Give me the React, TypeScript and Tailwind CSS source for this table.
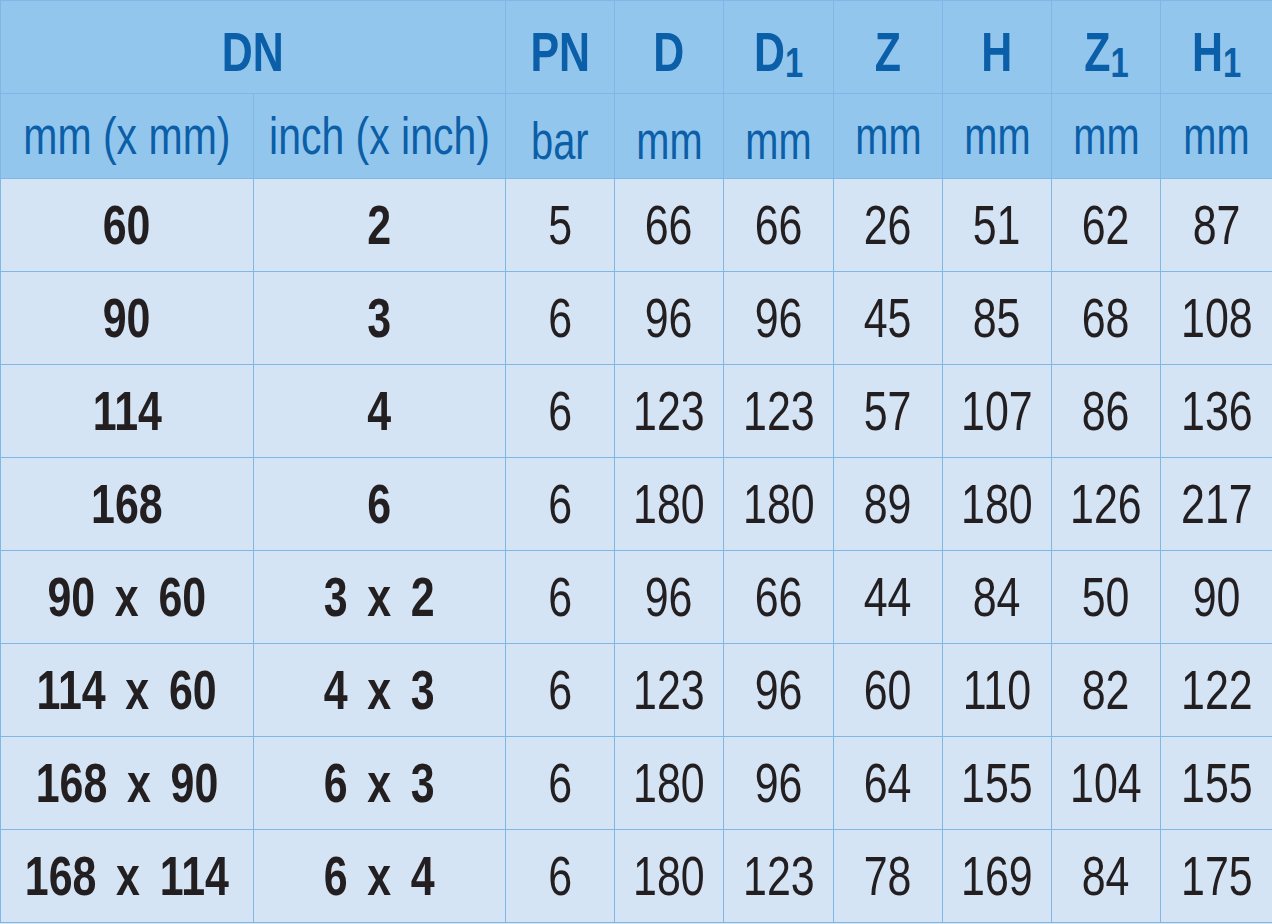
const font = 'font-["Liberation_Sans",Arial,sans-serif]'

type Row = { mm: string; inch: string; vals: string[] }

const rows: Row[] = [
  { mm: '60', inch: '2', vals: ['5', '66', '66', '26', '51', '62', '87'] },
  { mm: '90', inch: '3', vals: ['6', '96', '96', '45', '85', '68', '108'] },
  { mm: '114', inch: '4', vals: ['6', '123', '123', '57', '107', '86', '136'] },
  { mm: '168', inch: '6', vals: ['6', '180', '180', '89', '180', '126', '217'] },
  { mm: '90 x 60', inch: '3 x 2', vals: ['6', '96', '66', '44', '84', '50', '90'] },
  { mm: '114 x 60', inch: '4 x 3', vals: ['6', '123', '96', '60', '110', '82', '122'] },
  { mm: '168 x 90', inch: '6 x 3', vals: ['6', '180', '96', '64', '155', '104', '155'] },
  { mm: '168 x 114', inch: '6 x 4', vals: ['6', '180', '123', '78', '169', '84', '175'] },
]

const symbols = [
  { base: 'PN' },
  { base: 'D' },
  { base: 'D', sub: '1' },
  { base: 'Z' },
  { base: 'H' },
  { base: 'Z', sub: '1' },
  { base: 'H', sub: '1' },
]

const units = ['bar', 'mm', 'mm', 'mm', 'mm', 'mm', 'mm']

// condensed look: Liberation Sans squeezed horizontally, centred even when wider than the cell
function Narrow({ children, className = '' }: { children: React.ReactNode; className?: string }) {
  return (
    <div className={`flex justify-center ${className}`}>
      <span className="shrink-0 inline-block whitespace-nowrap scale-x-[0.78]">{children}</span>
    </div>
  )
}

export default function App() {
  const cell = 'border border-[#7fb7e6] text-center p-0 align-middle'
  return (
    <div className={`w-[1272px] h-[924px] overflow-hidden bg-[#d5e4f5] ${font}`}>
      <table className="table-fixed border-collapse w-[1272px]">
        <colgroup>
          <col className="w-[253px]" />
          <col className="w-[252px]" />
          <col className="w-[109px]" />
          <col className="w-[109px]" />
          <col className="w-[110px]" />
          <col className="w-[109px]" />
          <col className="w-[109px]" />
          <col className="w-[109px]" />
          <col className="w-[112px]" />
        </colgroup>
        <thead className="bg-[#93c6ec] text-[#0b5ea8]">
          <tr className="h-[93px] text-[55px] font-bold leading-none">
            <th colSpan={2} className={cell}>
              <Narrow className="pt-[10px]">DN</Narrow>
            </th>
            {symbols.map((s, i) => (
              <th key={i} className={cell}>
                <Narrow className="pt-[10px]">
                  {s.base}
                  {s.sub && <span className="relative top-[6px] text-[42px]">{s.sub}</span>}
                </Narrow>
              </th>
            ))}
          </tr>
          <tr className="h-[85px] text-[51px] leading-none">
            <th className={`${cell} font-normal`}>
              <Narrow className="scale-x-[1.03]">mm (x mm)</Narrow>
            </th>
            <th className={`${cell} font-normal`}>
              <Narrow className="scale-x-[1.03]">inch (x inch)</Narrow>
            </th>
            {units.map((u, i) => (
              <th key={i} className={`${cell} font-normal`}>
                <Narrow className={i < 3 ? 'pt-[10px]' : ''}>{u}</Narrow>
              </th>
            ))}
          </tr>
        </thead>
        <tbody className="text-[#231f20] text-[55px] leading-none">
          {rows.map((r) => (
            <tr key={r.mm} className="h-[93px]">
              <td className={`${cell} font-bold`}>
                <Narrow className="[word-spacing:10px]">{r.mm}</Narrow>
              </td>
              <td className={`${cell} font-bold`}>
                <Narrow className="[word-spacing:10px]">{r.inch}</Narrow>
              </td>
              {r.vals.map((v, i) => (
                <td key={i} className={cell}>
                  <Narrow>{v}</Narrow>
                </td>
              ))}
            </tr>
          ))}
        </tbody>
      </table>
    </div>
  )
}
